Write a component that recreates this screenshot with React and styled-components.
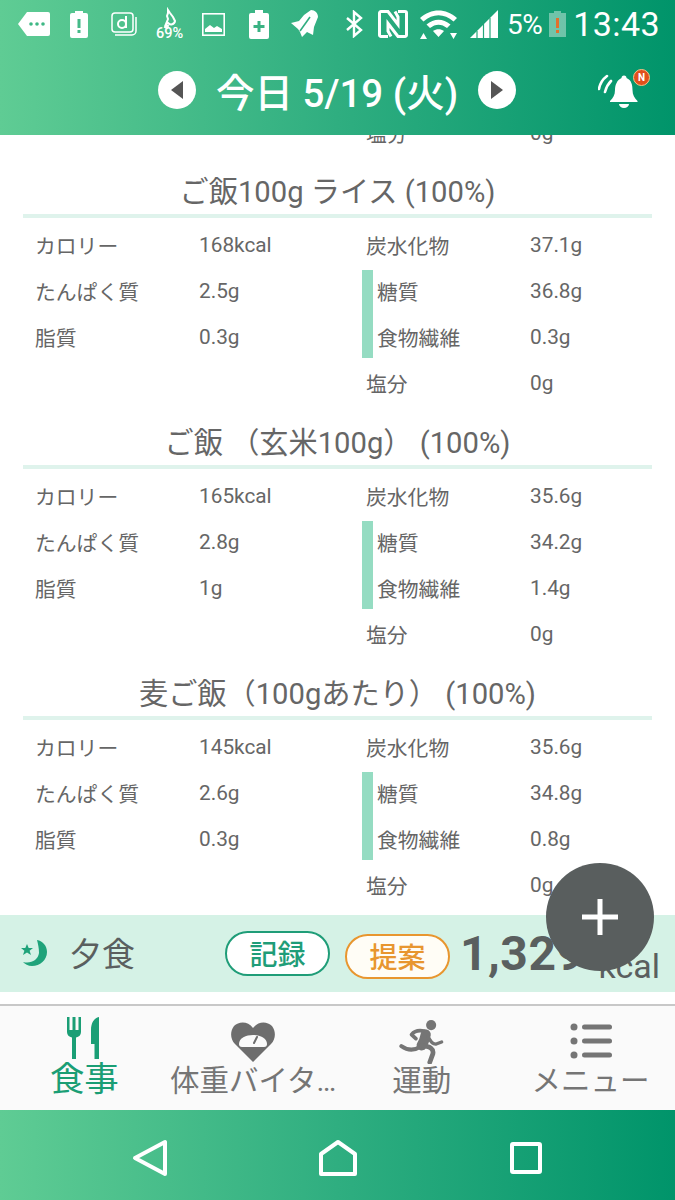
import styled, { createGlobalStyle } from 'styled-components'

const GlobalStyle = createGlobalStyle`
  html, body {
    margin: 0;
    padding: 0;
    background: #fff;
    font-family: Roboto, "Noto Sans CJK JP", sans-serif;
  }
`

const greenGradient = 'linear-gradient(90deg, #5fcc94 0%, #2fae80 50%, #00946a 100%)'

const Phone = styled('div')`
  position: relative;
  width: 675px;
  height: 1200px;
  display: flex;
  flex-direction: column;
  overflow: hidden;
  color: #666;
`

const Header = styled('header')`
  height: 135px;
  flex: none;
  background: ${greenGradient};
  color: #fff;
`

const StatusBar = styled('div')`
  height: 48px;
  display: flex;
  align-items: center;
  padding-left: 18px;
  padding-right: 15px;
`

const StatusIcon = styled('svg')`
  flex: none;
  margin-left: ${(p) => p.$gap}px;
  fill: #fff;
`

const OutlineIcon = styled(StatusIcon)`
  fill: none;
  stroke: #fff;
  stroke-width: ${(p) => p.$stroke}px;
`

const Percent = styled('span')`
  margin-left: 9px;
  font-size: 28px;
  letter-spacing: -0.5px;
`

const Clock = styled('span')`
  margin-left: auto;
  font-size: 34px;
  letter-spacing: 0.4px;
`

const DateBar = styled('div')`
  height: 84px;
  display: flex;
  align-items: center;
  padding-left: 158px;
`

const ArrowButton = styled('button')`
  width: 38px;
  height: 38px;
  padding: 0;
  border: 0;
  border-radius: 50%;
  background: #fff;
  display: flex;
  align-items: center;
  justify-content: center;
`

const DateTitle = styled('h1')`
  margin: 0 20px;
  width: 242px;
  font-size: 38.5px;
  font-weight: 500;
  white-space: nowrap;
`

const BellWrap = styled('div')`
  position: relative;
  margin-left: 82px;
  width: 50px;
  height: 46px;
`

const Badge = styled('span')`
  position: absolute;
  right: -2px;
  top: 2px;
  box-sizing: border-box;
  width: 17px;
  height: 17px;
  border-radius: 50%;
  background: #e0501c;
  border: 1px solid #f5c58a;
  color: #fff;
  font-size: 10px;
  font-weight: 700;
  line-height: 15px;
  text-align: center;
`

const Scroll = styled('main')`
  flex: 1;
  min-height: 0;
  overflow: hidden;
  padding: 0 23px;
  background: #fff;
`

const Partial = styled('div')`
  margin-top: -25px;
`

const FoodBlock = styled('section')`
  padding-bottom: 1px;
`

const SectionTitle = styled('h2')`
  margin: 0 0 4px;
  height: 50px;
  padding-top: 8px;
  border-bottom: 4px solid #dff3ec;
  box-sizing: content-box;
  display: flex;
  align-items: center;
  justify-content: center;
  font-size: 29.2px;
  font-weight: 400;
  white-space: nowrap;
`

const Columns = styled('div')`
  display: flex;
`

const LeftColumn = styled('div')`
  width: 327px;
  padding-left: 12px;
  flex: none;
`

const RightColumn = styled('div')`
  flex: 1;
`

const Row = styled('div')`
  height: 46px;
  display: flex;
  align-items: center;
  font-size: 20.8px;
  white-space: nowrap;
  padding-left: ${(p) => (p.$side ? 4 : 0)}px;
`

const Label = styled('span')`
  flex: none;
  width: ${(p) => p.$width || 164}px;
`

const Sub = styled('div')`
  display: flex;
  align-items: center;
`

const SubBar = styled('div')`
  flex: none;
  width: 11px;
  height: 88px;
  background: #95dcc2;
`

const SubRows = styled('div')`
  flex: 1;
`

const MealBar = styled('section')`
  flex: none;
  height: 77px;
  background: #d5f2e6;
  display: flex;
  align-items: center;
  padding: 0 15px 0 20px;
  color: #5a5f5f;
`

const MealName = styled('span')`
  margin: -3px 0 0 21px;
  width: 156px;
  font-size: 33px;
`

const Pill = styled('button')`
  flex: none;
  box-sizing: border-box;
  width: 105px;
  height: 45px;
  padding: 0;
  border-radius: 23px;
  border: 2px solid ${(p) => p.$color};
  background: ${(p) => p.$bg};
  color: ${(p) => p.$color};
  font-family: inherit;
  font-size: 28px;
  font-weight: 500;
  margin-top: ${(p) => p.$drop}px;
  margin-left: ${(p) => p.$gap}px;
`

const Total = styled('span')`
  margin-left: 10px;
  font-size: 48px;
  font-weight: 700;
  letter-spacing: 0.5px;
`

const Unit = styled('span')`
  margin-left: auto;
  margin-top: 24px;
  font-size: 34px;
`

const Fab = styled('button')`
  position: absolute;
  left: 546px;
  top: 863px;
  width: 108px;
  height: 108px;
  padding: 0;
  border: 0;
  border-radius: 50%;
  background: #595e5e;
  display: flex;
  align-items: center;
  justify-content: center;
`

const Spacer = styled('div')`
  flex: none;
  height: 12px;
  background: #fff;
`

const TabBar = styled('nav')`
  flex: none;
  height: 106px;
  box-sizing: border-box;
  border-top: 2px solid #c8c8c8;
  background: #fafafa;
  display: grid;
  grid-template-columns: repeat(4, 1fr);
`

const Tab = styled('div')`
  display: flex;
  flex-direction: column;
  align-items: center;
  color: ${(p) => (p.$active ? '#1a9e75' : '#757575')};
`

const TabIcon = styled('div')`
  box-sizing: border-box;
  height: 58px;
  padding-top: ${(p) => p.$top}px;
  display: flex;
  justify-content: center;
`

const TabLabel = styled('span')`
  font-size: ${(p) => (p.$active ? 34.5 : 29.5)}px;
  line-height: 38px;
  margin-top: ${(p) => (p.$active ? -4 : -2)}px;
  white-space: nowrap;
`

const NavBar = styled('div')`
  flex: none;
  height: 90px;
  box-sizing: border-box;
  background: ${greenGradient};
  display: flex;
  align-items: center;
  padding: 6px 0 0 132px;
`

const NavIcon = styled('svg')`
  flex: none;
  margin-left: ${(p) => p.$gap}px;
  fill: none;
  stroke: #fff;
  stroke-width: 4;
  stroke-linejoin: round;
`

const foods = [
  {
    title: 'ご飯100g ライス (100%)',
    kcal: '168kcal', protein: '2.5g', fat: '0.3g',
    carbs: '37.1g', sugar: '36.8g', fiber: '0.3g', salt: '0g',
  },
  {
    title: 'ご飯 （玄米100g） (100%)',
    kcal: '165kcal', protein: '2.8g', fat: '1g',
    carbs: '35.6g', sugar: '34.2g', fiber: '1.4g', salt: '0g',
  },
  {
    title: '麦ご飯（100gあたり） (100%)',
    kcal: '145kcal', protein: '2.6g', fat: '0.3g',
    carbs: '35.6g', sugar: '34.8g', fiber: '0.8g', salt: '0g',
  },
]

const Food = ({ food }) => (
  <FoodBlock>
    <SectionTitle>{food.title}</SectionTitle>
    <Columns>
      <LeftColumn>
        <Row><Label>カロリー</Label>{food.kcal}</Row>
        <Row><Label>たんぱく質</Label>{food.protein}</Row>
        <Row><Label>脂質</Label>{food.fat}</Row>
      </LeftColumn>
      <RightColumn>
        <Row $side><Label>炭水化物</Label>{food.carbs}</Row>
        <Sub>
          <SubBar />
          <SubRows>
            <Row $side><Label $width={153}>糖質</Label>{food.sugar}</Row>
            <Row $side><Label $width={153}>食物繊維</Label>{food.fiber}</Row>
          </SubRows>
        </Sub>
        <Row $side><Label>塩分</Label>{food.salt}</Row>
      </RightColumn>
    </Columns>
  </FoodBlock>
)

const StatusIcons = () => (
  <>
    <StatusIcon $gap={0} width="32" height="24" viewBox="0 0 32 24">
      <path d="M9 0h21a2 2 0 0 1 2 2v20a2 2 0 0 1-2 2H9L0 12z" />
      <g fill="#3fb885">
        <circle cx="13" cy="12" r="1.8" /><circle cx="19" cy="12" r="1.8" /><circle cx="25" cy="12" r="1.8" />
      </g>
    </StatusIcon>
    <StatusIcon $gap={20} width="18" height="27" viewBox="0 0 18 27">
      <path d="M5 0h8v2h3a2 2 0 0 1 2 2v21a2 2 0 0 1-2 2H2a2 2 0 0 1-2-2V4a2 2 0 0 1 2-2h3z" />
      <path d="M7.5 8h3v9h-3zM7.5 19h3v3h-3z" fill="#45ba88" />
    </StatusIcon>
    <OutlineIcon $gap={23} $stroke={1.5} width="26" height="24" viewBox="0 0 26 24">
      <rect x="1" y="1" width="21" height="19" rx="3" />
      <path d="M4 23h17a4 4 0 0 0 4-4V5" />
      <circle cx="11" cy="12" r="4" strokeWidth="2" />
      <path d="M15 4v12" strokeWidth="2" />
    </OutlineIcon>
    <StatusIcon $gap={18} width="29" height="34" viewBox="0 0 29 34">
      <path d="M13 3l2 3 3 4 2 4a4 4 0 0 1-7 2l-2 1 2-5-1-3 1-3zM11 18l2 1-1 2-2-1z" fill="none" stroke="#fff" strokeWidth="2" />
      <text x="14.5" y="31" textAnchor="middle" fontSize="14.5" fontWeight="500" fontFamily="Roboto, sans-serif">69%</text>
    </StatusIcon>
    <StatusIcon $gap={18} width="23" height="23" viewBox="0 0 23 23">
      <rect x="0.8" y="0.8" width="21.4" height="21.4" fill="none" stroke="#fff" strokeWidth="1.6" />
      <path d="M3 19v-3l5-4 4 3 3-2 5 3v3z" />
    </StatusIcon>
    <StatusIcon $gap={24} width="20" height="29" viewBox="0 0 20 29">
      <path d="M6 0h8v3h4a2 2 0 0 1 2 2v22a2 2 0 0 1-2 2H2a2 2 0 0 1-2-2V5a2 2 0 0 1 2-2h4z" />
      <path d="M8.5 11h3v4h4v3h-4v4h-3v-4h-4v-3h4z" fill="#3ab283" />
    </StatusIcon>
    <StatusIcon $gap={20} width="30" height="30" viewBox="0 0 30 30">
      <path d="M22 1c4 0 7 3 7 7l-4 10-1 8-6-3-5 5-2-5-2-3-7-6 8-2 5-6z" />
      <path d="M21 8L11 22" stroke="#31ad80" strokeWidth="1.6" />
    </StatusIcon>
    <OutlineIcon $gap={26} $stroke={2.4} width="18" height="28" viewBox="0 0 18 28">
      <path d="M2 8l14 12-7 6V2l7 6L2 20" />
    </OutlineIcon>
    <OutlineIcon $gap={15} $stroke={3} width="30" height="28" viewBox="0 0 30 28">
      <path d="M10 26.500H3A1.500 1.500 0 0 1 1.500 25V3A1.500 1.500 0 0 1 3 1.500h7l10 13V7l-3-5.500" />
      <path d="M20 1.500h7A1.500 1.500 0 0 1 28.500 3v22a1.500 1.500 0 0 1-1.500 1.500h-7l-10-13V21l3 5.500" />
    </OutlineIcon>
    <StatusIcon $gap={12} width="37" height="29" viewBox="0 0 37 29">
      <path d="M0 8c11-10 26-10 37 0l-3.500 3.500C24 3 13 3 3.500 11.500zM6.500 14.500c7.500-6.500 16.500-6.500 24 0l-3.500 3.500c-5.500-4.500-11.500-4.500-17 0zM13 21c3.500-2.500 7.500-2.500 11 0l-5.500 6z" />
      <path d="M0 29l3.500-6 3.500 6zM30 23h7l-3.500 6z" />
    </StatusIcon>
    <StatusIcon $gap={13} width="28" height="28" viewBox="0 0 28 28">
      <path d="M0 28L28 0v28z" />
      <path d="M7 28v-7M13.500 28V14M20 28V8" stroke="#26a77b" strokeWidth="1.2" />
    </StatusIcon>
    <Percent>5%</Percent>
    <StatusIcon $gap={7} width="17" height="26" viewBox="0 0 17 26">
      <path d="M5 0h7v2h5v24H0V2h5z" fill="#fff" opacity="0.4" />
      <path d="M7 7h3v10H7zM7 19h3v3H7z" fill="#e2702c" />
    </StatusIcon>
    <Clock>13:43</Clock>
  </>
)

const Bell = () => (
  <svg width="50" height="46" viewBox="0 0 50 46" fill="#fff">
    <path d="M23.500 11a2.500 2.500 0 0 1 5 0c5 2 6 7 6 12 0 5 2 8 5 11v1H12v-1c3-3 5-6 5-11 0-5 2-10 6.500-12z" />
    <path d="M21 37h10a5 4 0 0 1-10 0z" />
    <path d="M1 22c1-6 4-10 8-13M7 25c1-4 3-8 6-11" fill="none" stroke="#fff" strokeWidth="2.600" strokeLinecap="round" />
  </svg>
)

const Moon = () => (
  <svg width="28" height="27" viewBox="0 0 28 27" fill="#1fa37a">
    <path d="M17 0c6 1 10 6 10 12 0 8-7 14-15 14-4 0-7-2-9-4 8 2 15-2 16-9 0-5-1-9-2-13z" />
    <path d="M7 4l1.700 4H13l-3.400 2.700L11 15l-4-2.600L3 15l1.400-4.300L1 8h4.300z" />
  </svg>
)

const ForkKnife = () => (
  <svg width="34" height="42" viewBox="0 0 34 42" fill="#1a9e75">
    <path d="M0 0h2.500v13h3V0h3v13h3V0H14v15c0 3-2 5-5 5.500V42H5V20.500C2 20 0 18 0 15z" />
    <path d="M32 0v42h-4.500V27H24V13c0-7 3-12 8-13z" />
  </svg>
)

const HeartGauge = () => (
  <svg width="44" height="40" viewBox="0 0 44 40">
    <path d="M22 40L4 22C-1 17-1 9 3 4c5-5 14-5 19 2 5-7 14-7 19-2 4 5 4 13-1 18z" fill="#6d6d6d" />
    <path d="M8 22c0-6 7-9 14-9s14 3 14 9c0 2-1 3-3 3H11c-2 0-3-1-3-3z" fill="#fafafa" />
    <path d="M23 21l3-6" stroke="#6d6d6d" strokeWidth="2" strokeLinecap="round" />
  </svg>
)

const Runner = () => (
  <svg width="45" height="45" viewBox="25 22 133 133" fill="none" stroke="#757575" strokeLinecap="round" strokeLinejoin="round">
    <circle cx="120" cy="40" r="15" fill="#757575" stroke="none" />
    <path d="M104 68Q100 88 92 100" strokeWidth="30" />
    <path d="M100 58Q75 52 62 68L75 80" strokeWidth="11" />
    <path d="M110 72Q122 98 135 96L151 90" strokeWidth="10" />
    <path d="M88 104Q60 122 32 102" strokeWidth="12" />
    <path d="M92 100Q130 104 125 125L116 150" strokeWidth="14" />
  </svg>
)

const MenuIcon = () => (
  <svg width="42" height="36" viewBox="0 0 42 36" fill="#757575">
    <circle cx="4" cy="4" r="3.500" /><circle cx="4" cy="18" r="3.500" /><circle cx="4" cy="32" r="3.500" />
    <rect x="12" y="1.500" width="30" height="5" rx="2.500" />
    <rect x="12" y="15.500" width="30" height="5" rx="2.500" />
    <rect x="12" y="29.500" width="30" height="5" rx="2.500" />
  </svg>
)

const App = () => (
  <Phone>
    <GlobalStyle />
    <Header>
      <StatusBar><StatusIcons /></StatusBar>
      <DateBar>
        <ArrowButton>
          <svg width="12" height="18" viewBox="0 0 12 18" fill="#555"><path d="M12 0v18L0 9z" /></svg>
        </ArrowButton>
        <DateTitle>今日 5/19 (火)</DateTitle>
        <ArrowButton>
          <svg width="12" height="18" viewBox="0 0 12 18" fill="#555"><path d="M0 0v18l12-9z" /></svg>
        </ArrowButton>
        <BellWrap>
          <Bell />
          <Badge>N</Badge>
        </BellWrap>
      </DateBar>
    </Header>

    <Scroll>
      <Partial>
        <Columns>
          <LeftColumn />
          <RightColumn>
            <Row $side><Label>塩分</Label>0g</Row>
          </RightColumn>
        </Columns>
      </Partial>
      {foods.map((food) => <Food key={food.title} food={food} />)}
    </Scroll>

    <MealBar>
      <Moon />
      <MealName>夕食</MealName>
      <Pill $color="#1f9d78" $bg="#fff" $drop={-1} $gap={0}>記録</Pill>
      <Pill $color="#e8962f" $bg="#fffdf6" $drop={5} $gap={15}>提案</Pill>
      <Total>1,329</Total>
      <Unit>kcal</Unit>
    </MealBar>
    <Spacer />

    <TabBar>
      <Tab $active>
        <TabIcon $top={11}><ForkKnife /></TabIcon>
        <TabLabel $active>食事</TabLabel>
      </Tab>
      <Tab>
        <TabIcon $top={16}><HeartGauge /></TabIcon>
        <TabLabel>体重バイタ…</TabLabel>
      </Tab>
      <Tab>
        <TabIcon $top={13}><Runner /></TabIcon>
        <TabLabel>運動</TabLabel>
      </Tab>
      <Tab>
        <TabIcon $top={17}><MenuIcon /></TabIcon>
        <TabLabel>メニュー</TabLabel>
      </Tab>
    </TabBar>

    <NavBar>
      <NavIcon $gap={0} width="36" height="38" viewBox="0 0 36 38">
        <path d="M33 3v32L3 19z" />
      </NavIcon>
      <NavIcon $gap={150} width="40" height="38" viewBox="0 0 40 38">
        <path d="M3 15L20 3l17 12v20H3z" />
      </NavIcon>
      <NavIcon $gap={152} width="32" height="32" viewBox="0 0 32 32">
        <rect x="2" y="2" width="28" height="28" rx="1" />
      </NavIcon>
    </NavBar>

    <Fab>
      <svg width="36" height="36" viewBox="0 0 36 36" fill="#fff">
        <path d="M15.500 0h5v15.500H36v5H20.500V36h-5V20.500H0v-5h15.500z" />
      </svg>
    </Fab>
  </Phone>
)

export default App
